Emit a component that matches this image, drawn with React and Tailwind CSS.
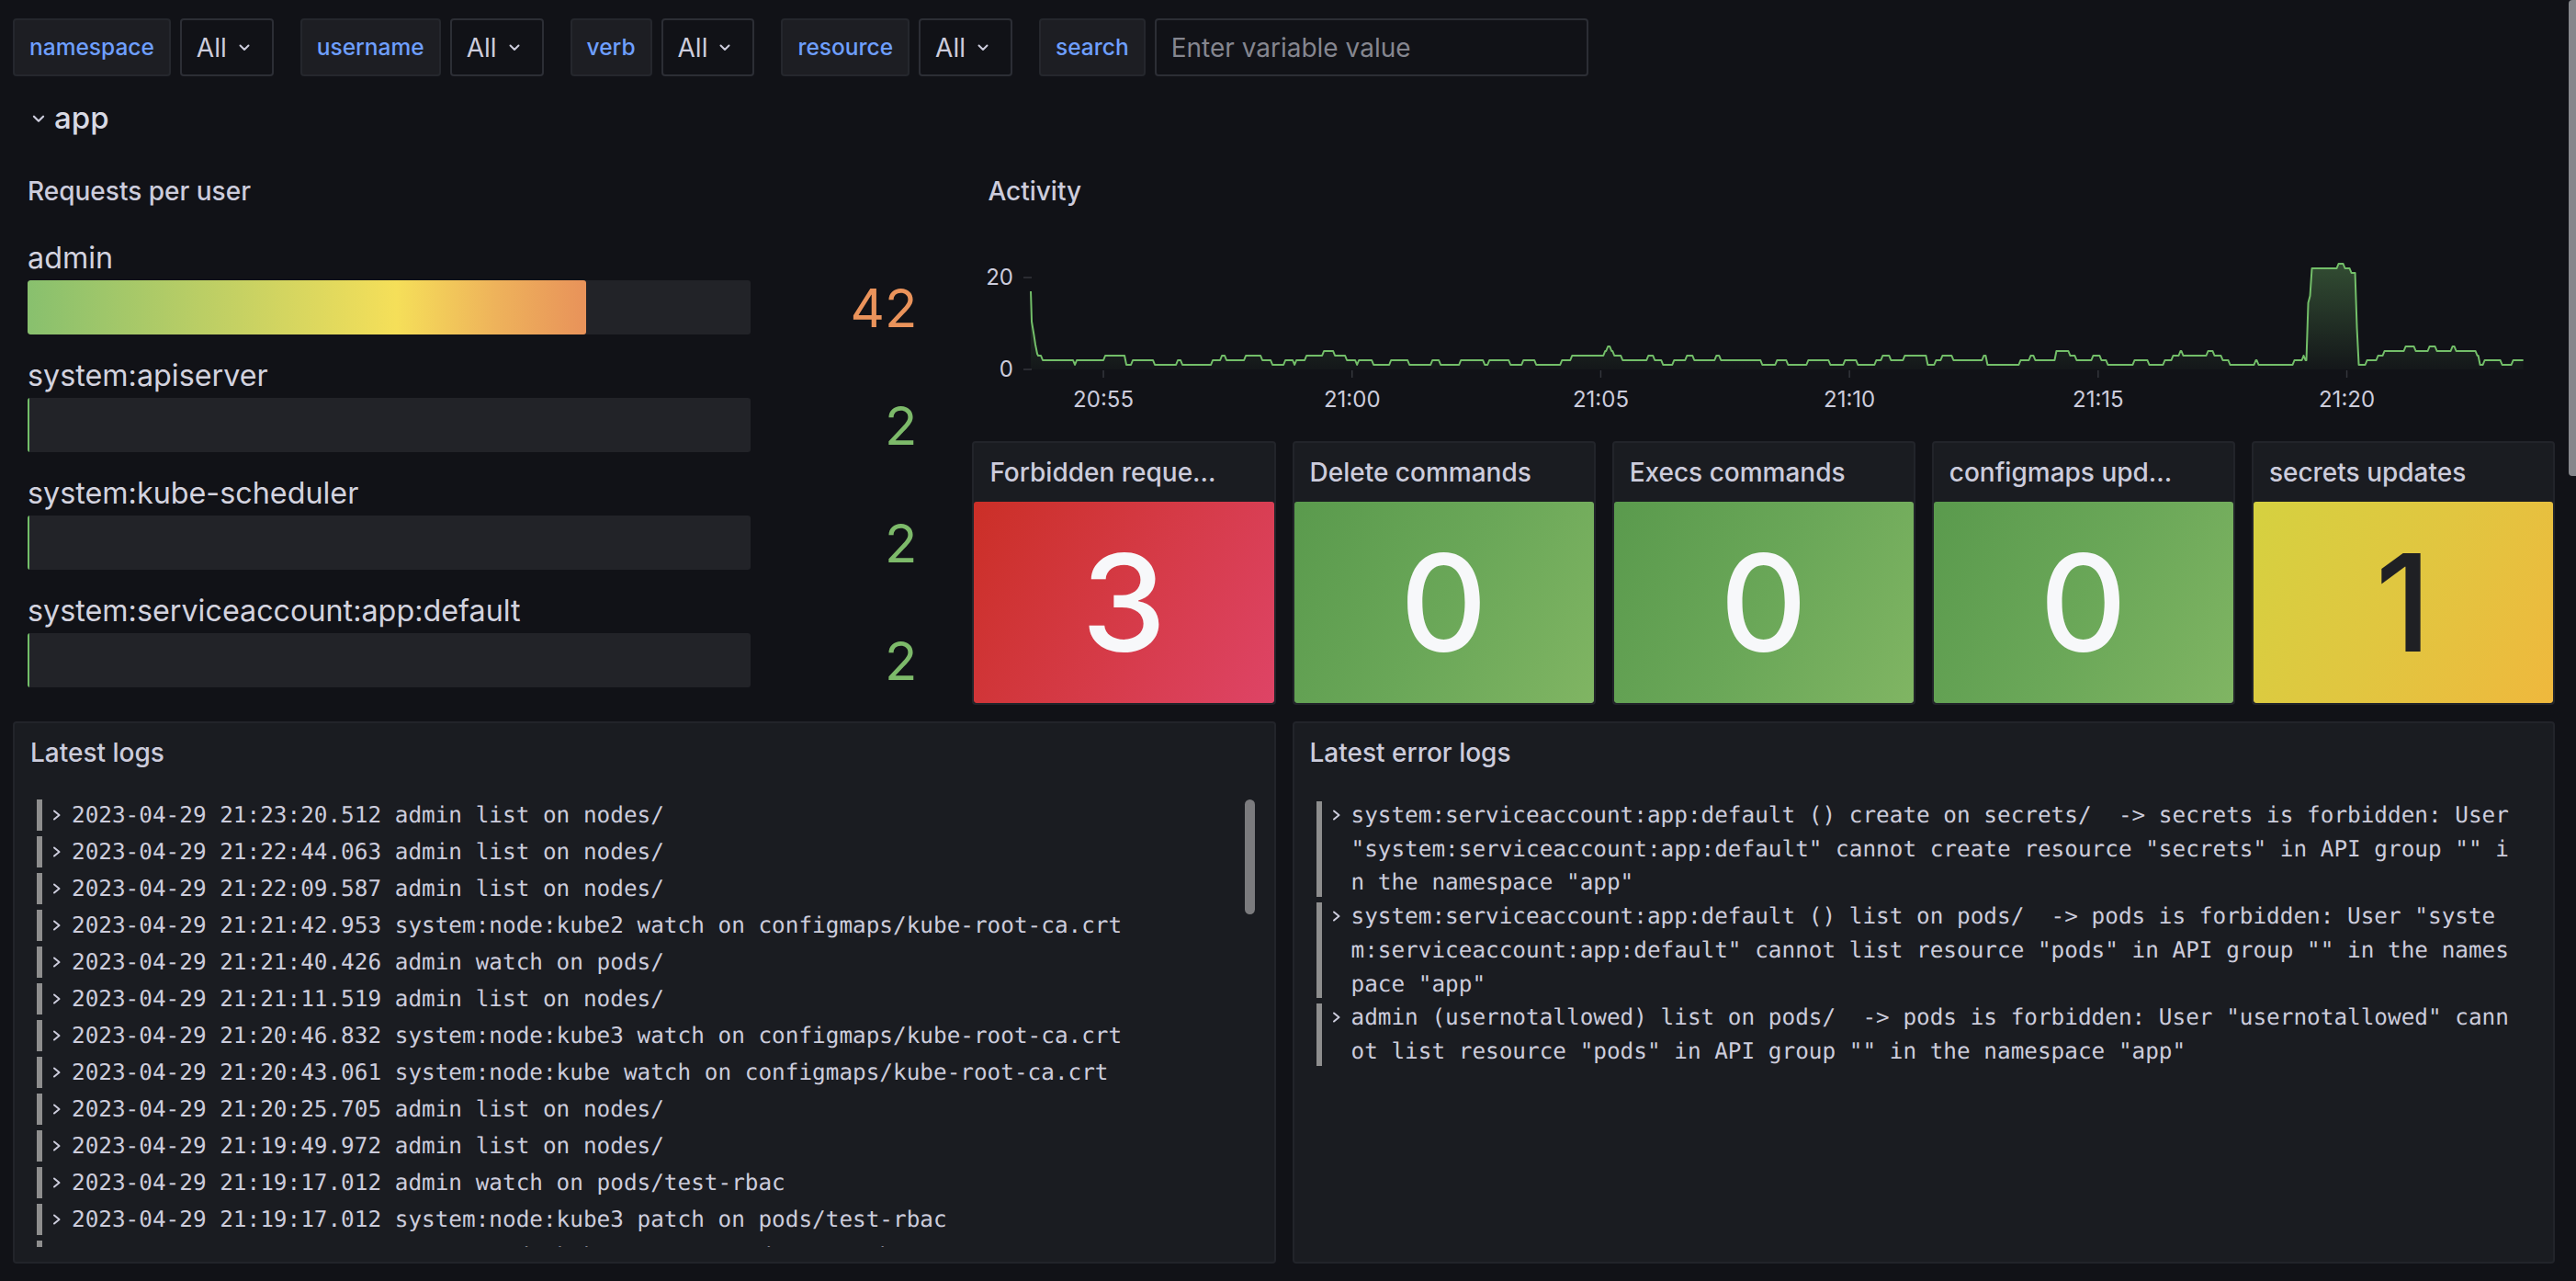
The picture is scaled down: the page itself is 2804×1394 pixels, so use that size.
import React from 'react'

const Chevron = ({ className }) => (
  <svg viewBox="0 0 12 8" className={className} fill="none" stroke="currentColor" strokeWidth="2" strokeLinecap="round" strokeLinejoin="round">
    <path d="M1.5 1.5 6 6l4.5-4.5" />
  </svg>
)

const RightChevron = () => (
  <svg viewBox="0 0 10 12" className="w-[10px] h-[12px] text-[#ccccdc]" fill="none" stroke="currentColor" strokeWidth="2" strokeLinecap="round" strokeLinejoin="round">
    <path d="M2 1.5 7.5 6 2 10.5" />
  </svg>
)

const Variable = ({ label, value, input }) => (
  <div className="flex items-center gap-[10px]">
    <div className="h-[63px] px-[16px] flex items-center rounded-[4px] border-2 border-[#25272d] bg-[#1d1e23] text-[24.5px] font-medium text-[#6e9fff]">
      {label}
    </div>
    {input ? (
      <div className="h-[63px] w-[472px] px-[16px] flex items-center rounded-[4px] border-2 border-[#2c2e35] text-[28px] text-[#85868f]">
        Enter variable value
      </div>
    ) : (
      <div className="h-[63px] pl-[16px] pr-[24px] flex items-center gap-[13px] rounded-[4px] border-2 border-[#2c2e35] text-[28px] text-[#ccccdc]">
        {value}
        <Chevron className="w-[12px] h-[8px]" />
      </div>
    )}
  </div>
)

// activity series: [x in page px, value]
const steps = [
  [1133, 2], [1168, 1], [1170, 2], [1201, 3], [1224, 1], [1231, 2], [1255, 1], [1280, 2], [1285, 1],
  [1318, 2], [1328, 3], [1333, 2], [1354, 3], [1372, 2], [1383, 1], [1397, 2], [1407, 1], [1409, 2],
  [1420, 3], [1439, 4], [1451, 3], [1464, 2], [1475, 1], [1477, 2], [1493, 1], [1512, 2], [1532, 1],
  [1557, 2], [1566, 1], [1588, 2], [1614, 1], [1619, 2], [1642, 1], [1656, 2], [1670, 1], [1698, 2],
  [1709, 3], [1745, 4], [1748, 5], [1752, 4], [1755, 3], [1764, 2], [1792, 3], [1799, 2], [1808, 1],
  [1820, 2], [1834, 3], [1842, 2], [1866, 3], [1871, 2], [1916, 1], [1932, 2], [1944, 1], [1966, 2],
  [1990, 1], [2006, 2], [2020, 1], [2040, 2], [2047, 3], [2056, 2], [2071, 3], [2096, 1], [2105, 2],
  [2112, 3], [2124, 2], [2157, 3], [2161, 1], [2197, 2], [2208, 3], [2213, 2], [2236, 4], [2251, 3],
  [2258, 2], [2276, 3], [2285, 2], [2292, 1], [2321, 2], [2337, 1], [2354, 2], [2363, 3], [2371, 4],
  [2374, 3], [2401, 4], [2408, 3], [2417, 2], [2425, 1], [2453, 2], [2456, 1], [2495, 2], [2505, 3],
  [2507, 2], [2510, 14.5], [2512, 16], [2514, 22], [2543, 23], [2550, 22], [2557, 21], [2563, 9],
  [2565, 1], [2574, 2], [2586, 3], [2593, 4], [2616, 5], [2627, 4], [2642, 5], [2650, 4], [2667, 5],
  [2671, 4], [2694, 3], [2697, 1], [2702, 2], [2721, 1], [2733, 2],
]

const X0 = 1058
const sx = (x) => x - X0
const sy = (v) => 161 - 5 * v

function linePoints() {
  const pts = [[1122, 17], [1123, 10.4], [1125.5, 7.4], [1127, 5.4], [1129, 3.4], [1130, 3]]
  let prev = 3
  steps.forEach(([x, v]) => {
    pts.push([x, prev])
    pts.push([x + 2, v])
    prev = v
  })
  pts.push([2746, prev])
  return pts
}

const pts = linePoints()
const linePath = pts.map((p, i) => `${i ? 'L' : 'M'}${sx(p[0]).toFixed(1)} ${sy(p[1]).toFixed(1)}`).join(' ')
const fillPath = `${linePath} L${sx(2746)} ${sy(0)} L${sx(1122)} ${sy(0)} Z`
const ticks = ['20:55', '21:00', '21:05', '21:10', '21:15', '21:20']

const ActivityChart = () => (
  <svg viewBox="0 0 1722 221" className="w-full h-[221px]" preserveAspectRatio="none">
    <defs>
      <linearGradient id="actFill" gradientUnits="userSpaceOnUse" x1="0" y1="45" x2="0" y2="161">
        <stop offset="0" stopColor="#73bf69" stopOpacity="0.34" />
        <stop offset="1" stopColor="#73bf69" stopOpacity="0.03" />
      </linearGradient>
    </defs>
    <g fill="#ccccdc" fontSize="24" fontFamily="Inter, sans-serif">
      <text x="45" y="61" textAnchor="end" dominantBaseline="central">20</text>
      <text x="45" y="161" textAnchor="end" dominantBaseline="central">0</text>
      {ticks.map((t, i) => (
        <text key={t} x={143 + i * 270.6} y="194" textAnchor="middle" dominantBaseline="central">{t}</text>
      ))}
    </g>
    <g stroke="#34363c" strokeWidth="1.5">
      <line x1="56" y1="61" x2="65" y2="61" />
      <line x1="56" y1="161" x2="65" y2="161" />
      {ticks.map((t, i) => (
        <line key={t} x1={143 + i * 270.6} y1="162" x2={143 + i * 270.6} y2="170" />
      ))}
    </g>
    <path d={fillPath} fill="url(#actFill)" />
    <path d={linePath} fill="none" stroke="#73bf69" strokeWidth="2" strokeLinejoin="round" />
  </svg>
)

const users = [
  { name: 'admin', value: '42', fill: true },
  { name: 'system:apiserver', value: '2' },
  { name: 'system:kube-scheduler', value: '2' },
  { name: 'system:serviceaccount:app:default', value: '2' },
]

const Stat = ({ title, value, bg, fg }) => (
  <div className="col-span-3 flex flex-col rounded-[4px] border-2 border-[#22242a] bg-[#1a1c21] overflow-hidden">
    <div className="h-[64px] shrink-0 px-[17px] flex items-center text-[28px] font-medium text-[#ccccdc] whitespace-nowrap">
      {title}
    </div>
    <div className={`flex-1 flex items-center justify-center rounded-[3px] ${bg}`}>
      <span className={`text-[147px] leading-none font-medium ${fg}`}>{value}</span>
    </div>
  </div>
)

const logs = [
  '2023-04-29 21:23:20.512 admin list on nodes/',
  '2023-04-29 21:22:44.063 admin list on nodes/',
  '2023-04-29 21:22:09.587 admin list on nodes/',
  '2023-04-29 21:21:42.953 system:node:kube2 watch on configmaps/kube-root-ca.crt',
  '2023-04-29 21:21:40.426 admin watch on pods/',
  '2023-04-29 21:21:11.519 admin list on nodes/',
  '2023-04-29 21:20:46.832 system:node:kube3 watch on configmaps/kube-root-ca.crt',
  '2023-04-29 21:20:43.061 system:node:kube watch on configmaps/kube-root-ca.crt',
  '2023-04-29 21:20:25.705 admin list on nodes/',
  '2023-04-29 21:19:49.972 admin list on nodes/',
  '2023-04-29 21:19:17.012 admin watch on pods/test-rbac',
  '2023-04-29 21:19:17.012 system:node:kube3 patch on pods/test-rbac',
  '2023-04-29 21:18:52.331 system:node:kube3 get on pods/test-rbac',
]

const errorLogs = [
  [
    'system:serviceaccount:app:default () create on secrets/  -> secrets is forbidden: User',
    '"system:serviceaccount:app:default" cannot create resource "secrets" in API group "" i',
    'n the namespace "app"',
  ],
  [
    'system:serviceaccount:app:default () list on pods/  -> pods is forbidden: User "syste',
    'm:serviceaccount:app:default" cannot list resource "pods" in API group "" in the names',
    'pace "app"',
  ],
  [
    'admin (usernotallowed) list on pods/  -> pods is forbidden: User "usernotallowed" cann',
    'ot list resource "pods" in API group "" in the namespace "app"',
  ],
]

const mono = "font-['DejaVu_Sans_Mono',monospace] text-[24.35px] [text-rendering:geometricPrecision] text-[#ccccdc] whitespace-pre"

const App = () => {
  return (
    <div className="relative w-[2804px] h-[1394px] overflow-hidden bg-[#111217] font-['Inter',sans-serif] text-[#ccccdc]">
      {/* variables */}
      <div className="flex items-center gap-[29px] pl-[14px] pt-[20px]">
        <Variable label="namespace" value="All" />
        <Variable label="username" value="All" />
        <Variable label="verb" value="All" />
        <Variable label="resource" value="All" />
        <Variable label="search" input />
      </div>

      {/* row header */}
      <div className="h-[92px] flex items-center gap-[10px] pl-[35px]">
        <Chevron className="w-[14px] h-[9px] text-[#ccccdc]" />
        <span className="text-[33px] font-medium text-[#d8d9e3]">app</span>
      </div>

      <div className="grid grid-cols-24 grid-rows-[287px_287px_590px] gap-[18px] pl-[14px] pr-[23px]">
        {/* Requests per user */}
        <div className="col-span-9 row-span-2 flex flex-col">
          <div className="h-[66px] shrink-0 pl-[16px] flex items-center text-[28px] font-medium">Requests per user</div>
          <div className="flex flex-col gap-[27px] pt-[22px] pl-[16px]">
            {users.map((u) => (
              <div key={u.name} className="flex flex-col gap-[6px]">
                <div className="text-[32.3px] leading-[36px] text-[#d3d3df]">{u.name}</div>
                <div className="flex items-center">
                  <div className="w-[787px] h-[59px] rounded-[3px] bg-[#222328] overflow-hidden flex">
                    {u.fill ? (
                      <div className="w-[608px] h-full rounded-[3px] bg-[linear-gradient(90deg,#88c06e_0%,#c6d163_38%,#f5df59_66%,#eeb25b_84%,#e8925a_100%)]" />
                    ) : (
                      <div className="w-[2px] h-full bg-[#73bf69]" />
                    )}
                  </div>
                  <div className={`flex-1 text-right pr-[42px] text-[58px] leading-none ${u.fill ? 'text-[#ea935b]' : 'text-[#7dba6a]'}`}>
                    {u.value}
                  </div>
                </div>
              </div>
            ))}
          </div>
        </div>

        {/* Activity */}
        <div className="col-span-15 flex flex-col">
          <div className="h-[66px] shrink-0 pl-[17px] flex items-center text-[28px] font-medium">Activity</div>
          <ActivityChart />
        </div>

        <Stat title="Forbidden reque..." value="3" bg="bg-[linear-gradient(120deg,#cb2f27_0%,#d53a46_50%,#de4466_100%)]" fg="text-[#f7f8fa]" />
        <Stat title="Delete commands" value="0" bg="bg-[linear-gradient(120deg,#5a9a4d_0%,#6aa758_50%,#80b563_100%)]" fg="text-[#f7f8fa]" />
        <Stat title="Execs commands" value="0" bg="bg-[linear-gradient(120deg,#5a9a4d_0%,#6aa758_50%,#80b563_100%)]" fg="text-[#f7f8fa]" />
        <Stat title="configmaps upd..." value="0" bg="bg-[linear-gradient(120deg,#5a9a4d_0%,#6aa758_50%,#80b563_100%)]" fg="text-[#f7f8fa]" />
        <Stat title="secrets updates" value="1" bg="bg-[linear-gradient(120deg,#d5d140_0%,#e1c640_50%,#efb83d_100%)]" fg="text-[#1f2024]" />

        {/* Latest logs */}
        <div className="col-span-12 relative flex flex-col rounded-[4px] border-2 border-[#22242a] bg-[#1a1c21] overflow-hidden">
          <div className="h-[64px] shrink-0 pl-[17px] flex items-center text-[28px] font-medium">Latest logs</div>
          <div className="mt-[16px] h-[490px] overflow-hidden">
            {logs.map((l, i) => (
              <div key={i} className="h-[40px] flex items-center pl-[24px]">
                <div className="w-[6px] h-[34px] shrink-0 bg-[#8e8e8e]" />
                <div className="w-[32px] shrink-0 flex justify-center"><RightChevron /></div>
                <span className={mono}>{l}</span>
              </div>
            ))}
          </div>
          <div className="absolute right-[21px] top-[83px] w-[11px] h-[125px] rounded-full bg-[#7b7b7e]" />
        </div>

        {/* Latest error logs */}
        <div className="col-span-12 flex flex-col rounded-[4px] border-2 border-[#22242a] bg-[#1a1c21] overflow-hidden">
          <div className="h-[64px] shrink-0 pl-[17px] flex items-center text-[28px] font-medium">Latest error logs</div>
          <div className="mt-[18px]">
            {errorLogs.map((e, i) => (
              <div key={i} className="flex pl-[24px]">
                <div className="w-[6px] shrink-0 my-[3px] bg-[#8e8e8e]" />
                <div className="w-[32px] shrink-0 flex justify-center pt-[12px]"><RightChevron /></div>
                <div className="flex flex-col">
                  {e.map((line, j) => (
                    <div key={j} className={`${mono} leading-[36.7px]`}>{line}</div>
                  ))}
                </div>
              </div>
            ))}
          </div>
        </div>
      </div>

      {/* page scrollbar */}
      <div className="absolute right-0 top-0 w-[8px] h-[518px] rounded-l-[4px] bg-[#85868b]" />
    </div>
  )
}

export default App
